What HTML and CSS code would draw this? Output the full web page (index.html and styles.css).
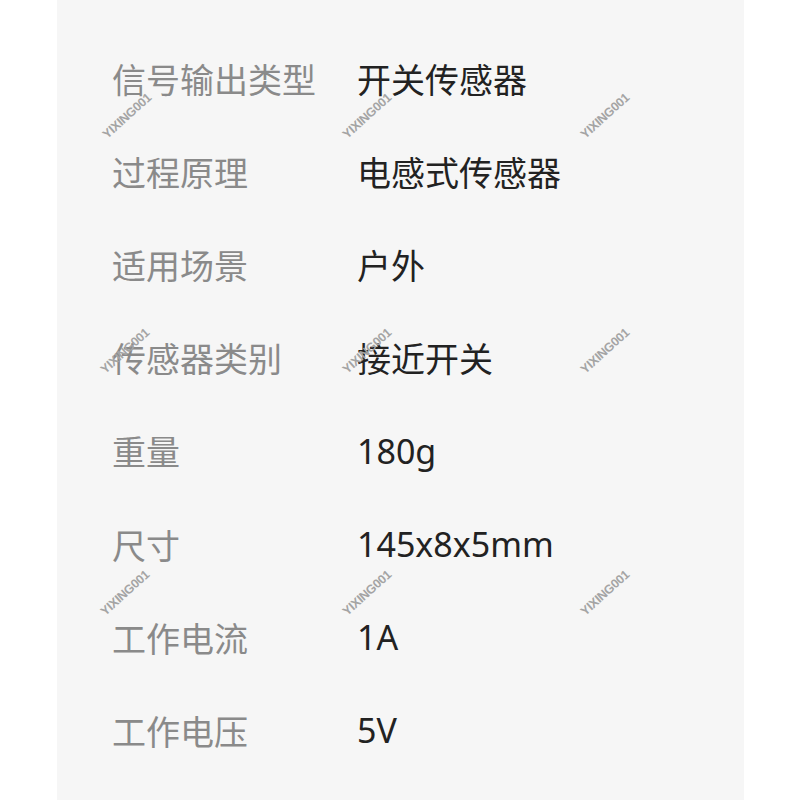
FILE: index.html
```html
<!DOCTYPE html>
<html lang="zh-CN">
<head>
  <meta charset="UTF-8">
  <meta name="viewport" content="width=device-width, initial-scale=1.0">
  <title>产品参数</title>
  <link rel="stylesheet" href="styles.css">
</head>
<body>
  <main class="panel">
    <dl class="specs">
      <div class="row"><dt>信号输出类型</dt><dd>开关传感器</dd></div>
      <div class="row"><dt>过程原理</dt><dd>电感式传感器</dd></div>
      <div class="row"><dt>适用场景</dt><dd>户外</dd></div>
      <div class="row"><dt>传感器类别</dt><dd>接近开关</dd></div>
      <div class="row"><dt>重量</dt><dd>180g</dd></div>
      <div class="row"><dt>尺寸</dt><dd>145x8x5mm</dd></div>
      <div class="row"><dt>工作电流</dt><dd>1A</dd></div>
      <div class="row"><dt>工作电压</dt><dd>5V</dd></div>
    </dl>

    <!-- watermark stamps laid over the table -->
    <span class="mark m1">YIXING001</span>
    <span class="mark m2">YIXING001</span>
    <span class="mark m3">YIXING001</span>
    <span class="mark m4">YIXING001</span>
    <span class="mark m5">YIXING001</span>
    <span class="mark m6">YIXING001</span>
    <span class="mark m7">YIXING001</span>
    <span class="mark m8">YIXING001</span>
    <span class="mark m9">YIXING001</span>
  </main>
</body>
</html>
```

FILE: styles.css
```css
/* Reset & Base */
* {
  margin: 0;
  padding: 0;
  box-sizing: border-box;
}

body {
  font-family: "Noto Sans", "Noto Sans CJK SC", sans-serif;
  background: #fff;
  width: 800px;
  height: 800px;
  overflow: hidden;
}

.panel {
  position: relative;
  margin-left: 57px;
  width: 687px;
  height: 800px;
  background: #f6f6f6;
  padding: 32px 0 0 55px;
}

.specs .row {
  display: grid;
  grid-template-columns: 245px 1fr;
  height: 93.1px;
  align-items: center;
  font-size: 34px;
}

.specs dt {
  color: #8a8a8a;
}

.specs dd {
  color: #222;
}

/* Watermarks */
.mark {
  position: absolute;
  font-family: "Liberation Sans", sans-serif;
  font-size: 12.5px;
  font-weight: bold;
  color: #a4a4a4;
  letter-spacing: -0.3px;
  transform: translate(-50%, -50%) rotate(-42deg);
}

.m1 { left: 70px;  top: 116px; }
.m2 { left: 310px; top: 116px; }
.m3 { left: 548px; top: 116px; }
.m4 { left: 68px;  top: 351px; }
.m5 { left: 310px; top: 351px; }
.m6 { left: 548px; top: 351px; }
.m7 { left: 68px;  top: 593px; }
.m8 { left: 310px; top: 593px; }
.m9 { left: 548px; top: 593px; }
```
